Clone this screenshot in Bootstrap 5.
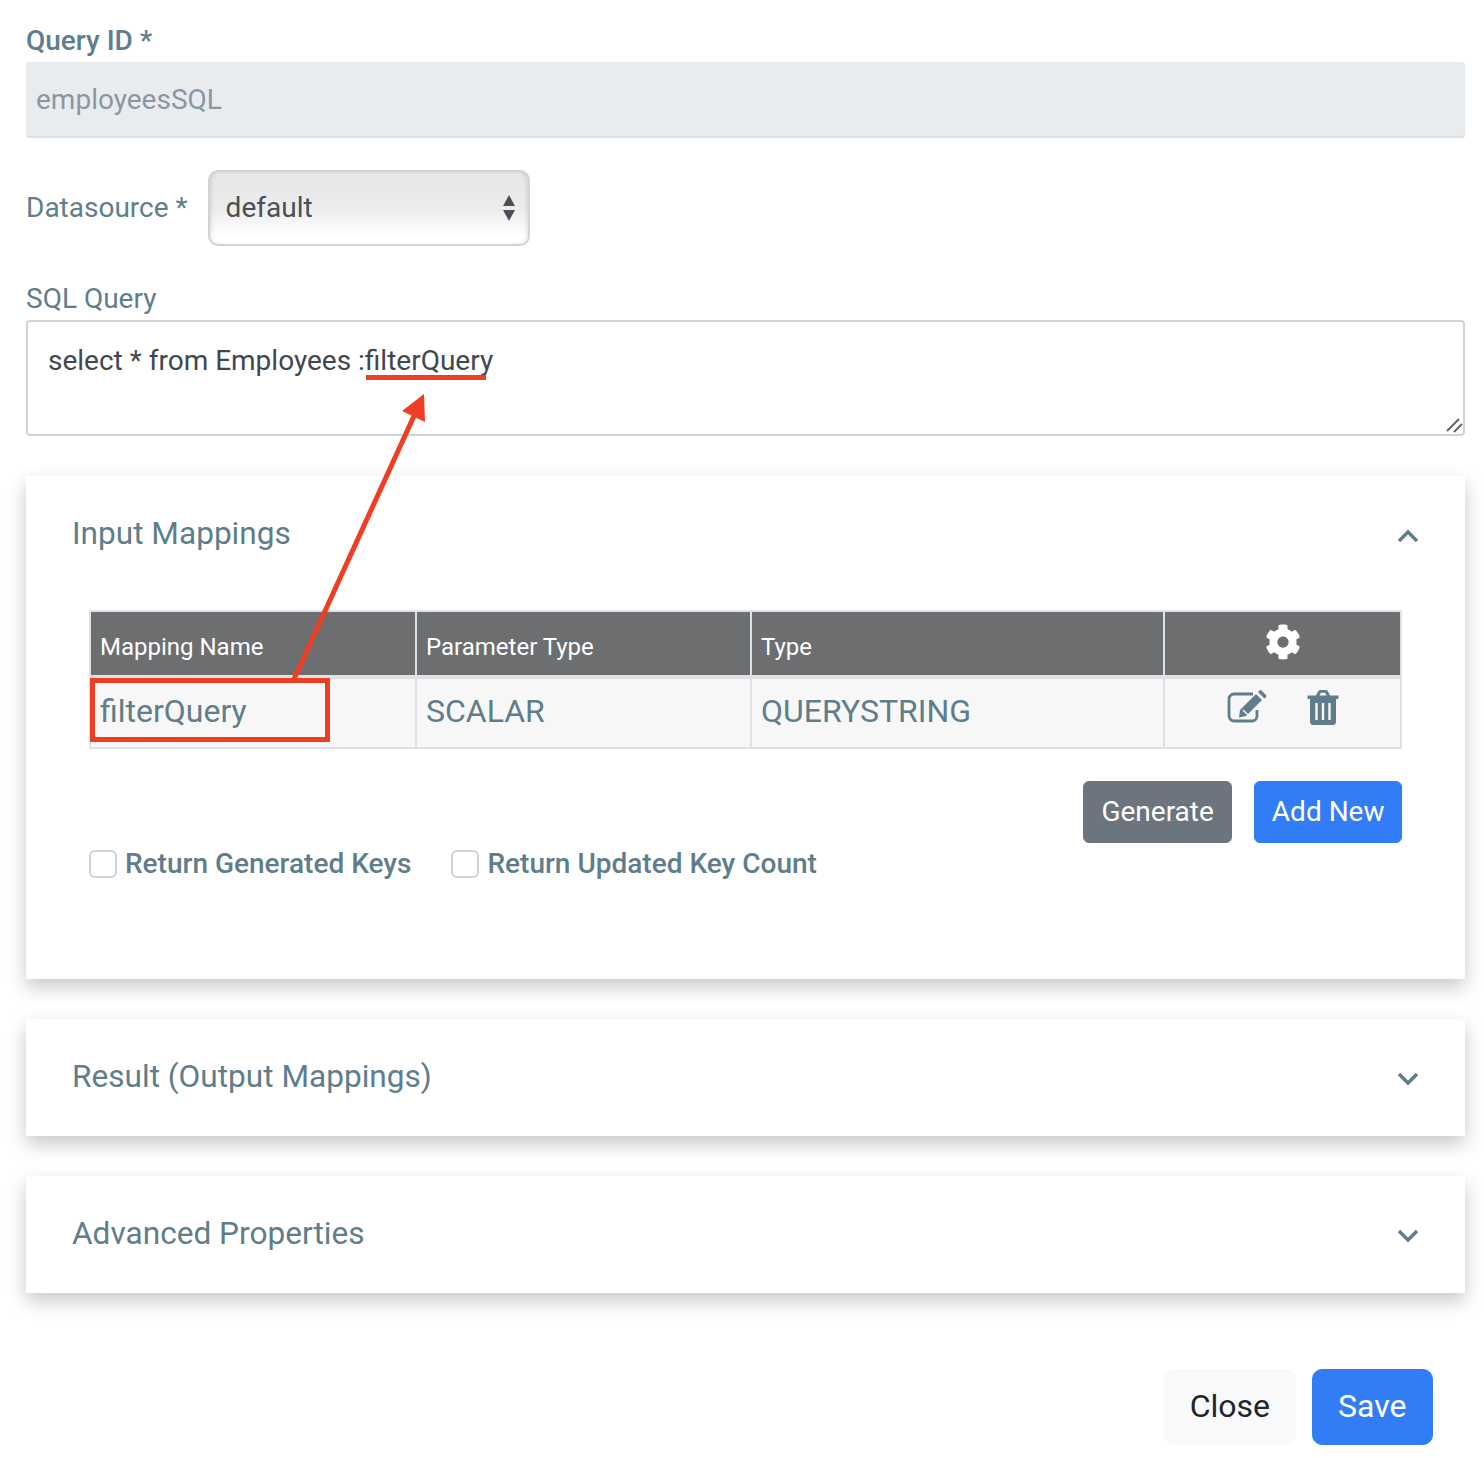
<!DOCTYPE html>
<html lang="en">
<head>
    <meta charset="UTF-8">
    <title>Edit Query</title>
    <link href="https://cdn.jsdelivr.net/npm/bootstrap@5.3.3/dist/css/bootstrap.min.css" rel="stylesheet">
    <style>
        body {
            font-family: Roboto, "Liberation Sans", sans-serif;
            background: #fff;
            color: #607d8b;
            font-size: 28px;
            position: relative;
            height: 1458px;
            overflow: hidden;
        }

        .page {
            padding: 23px 19px 0 26px;
        }

        .field-label {
            font-size: 28px;
            line-height: 36px;
            color: #607d8b;
            margin: 0;
        }

        .query-id {
            height: 76px;
            margin-top: 3px;
            font-size: 28px;
            padding: 2px 10px 0;
            border: 0;
            border-bottom: 2px solid #dcdfe3;
            border-radius: 3px;
            background: #e9ecef;
            color: #8a97a3;
        }

        .ds-row {
            margin-top: 32px;
            height: 76px;
        }

        .ds-select {
            width: 322px;
            height: 76px;
            margin-left: 20px;
            font-size: 28px;
            color: #495057;
            padding: 0 16px;
            border: 2px solid #ced4da;
            border-radius: 10px;
            background-color: #eee;
            background-image: url("data:image/svg+xml,%3Csvg xmlns='http://www.w3.org/2000/svg' viewBox='0 0 14 26'%3E%3Cpath fill='%23495057' d='M7 0l6 11H1zM7 26L1 15h12z'/%3E%3C/svg%3E"), linear-gradient(#e6e6e6, #ececec 50%, #fff 90%);
            background-repeat: no-repeat;
            background-position: right 12px center, 0 0;
            background-size: 14px 26px, 100% 100%;
            box-shadow: inset 3px 0 4px -2px rgba(0, 0, 0, .12), inset -3px 0 4px -2px rgba(0, 0, 0, .12);
        }

        .sql-label {
            margin-top: 35px;
        }

        .sql-box {
            display: block;
            width: 100%;
            height: 116px;
            margin-top: 3px;
            font-size: 28px;
            line-height: 36px;
            padding: 21px 20px;
            border: 2px solid #ced4da;
            border-radius: 4px;
            color: #3f474f;
            resize: none;
        }

        .panel {
            border: 0;
            border-radius: 0;
            background: #fff;
            box-shadow: 0 8px 18px rgba(0, 0, 0, .22);
            margin-top: 40px;
            padding: 0 46px;
        }

        .panel-head {
            height: 117px;
            padding-bottom: 1px;
        }

        .panel-title {
            font-size: 31.6px;
            font-weight: 400;
            color: #607d8b;
            margin: 0;
        }

        .panel-head svg {
            margin-top: 3px;
        }

        .open-body {
            height: 386px;
            padding: 17px 17px 0 17px;
        }

        .map-table {
            table-layout: fixed;
            width: 1311px;
            margin: 0;
            border: 2px solid #dee2e6;
            border-collapse: collapse;
        }

        .map-table th,
        .map-table td {
            border: 2px solid #dee2e6;
            vertical-align: middle;
            padding: 0 9px;
        }

        .map-table th {
            height: 66px;
            background: #6c6e70;
            color: #fff;
            font-size: 24px;
            font-weight: 400;
            padding-top: 6px;
            border-bottom-width: 4px;
        }

        .map-table td {
            height: 71px;
            background: #f7f7f7;
            color: #607d8b;
            font-size: 32px;
            padding-bottom: 5px;
        }

        .action-cell {
            text-align: center;
        }

        .action-cell svg {
            vertical-align: top;
        }

        .gear {
            margin-bottom: 10px;
        }

        .act-row {
            gap: 40px;
            margin-top: -6px;
        }

        .btn-row {
            gap: 22px;
            margin-top: 32px;
        }

        .btn-row .btn {
            height: 62px;
            font-size: 28px;
            padding: 0 17.5px;
            border-radius: 6px;
        }

        .btn-gen {
            background: #6c757d;
            border-color: #6c757d;
            color: #fff;
        }

        .btn-add,
        .btn-save {
            background: #327cf6;
            border-color: #327cf6;
            color: #fff;
        }

        .btn-row .btn-add {
            padding: 0 16.5px;
        }

        .check-row {
            gap: 40px;
        }

        .check-item {
            display: flex;
            align-items: center;
            gap: 8px;
            margin: 0;
            padding: 0;
            min-height: 0;
        }

        .check-item .form-check-input {
            float: none;
            width: 28px;
            height: 28px;
            margin: 0;
            border: 2px solid #ced4da;
            border-radius: 6px;
        }

        .check-item .form-check-label {
            font-size: 28px;
            font-weight: 500;
            color: #607d8b;
        }

        .closed {
            height: 117px;
        }

        .footer-row {
            gap: 16px;
            margin: 76px 32px 0 0;
        }

        .footer-row .btn {
            height: 76px;
            font-size: 32px;
            border-radius: 10px;
            padding: 0 24.5px 2px;
        }

        .footer-row .btn-save {
            padding: 0 25.5px 2px;
        }

        .btn-close-lite {
            background: #f8f9fa;
            border-color: #f8f9fa;
            color: #212529;
        }

        .note-overlay {
            position: absolute;
            left: 0;
            top: 0;
            pointer-events: none;
        }
    </style>
</head>
<body>
    <div class="page">
        <label class="field-label fw-medium d-block">Query ID *</label>
        <div class="query-id d-flex align-items-center">employeesSQL</div>

        <div class="ds-row d-flex align-items-center">
            <label class="field-label">Datasource *</label>
            <select class="form-select ds-select">
                <option>default</option>
            </select>
        </div>

        <label class="field-label sql-label d-block">SQL Query</label>
        <textarea class="sql-box">select * from Employees :filterQuery</textarea>

        <div class="card panel">
            <div class="panel-head d-flex justify-content-between align-items-center">
                <h5 class="panel-title">Input Mappings</h5>
                <svg width="22" height="14" viewBox="0 0 22 14"><path d="M2 12l9-9 9 9" fill="none" stroke="#607d8b" stroke-width="3.400"/></svg>
            </div>
            <div class="open-body">
                <table class="table map-table">
                    <colgroup>
                        <col style="width: 326px">
                        <col style="width: 335px">
                        <col style="width: 413px">
                        <col style="width: 237px">
                    </colgroup>
                    <thead>
                        <tr>
                            <th>Mapping Name</th>
                            <th>Parameter Type</th>
                            <th>Type</th>
                            <th class="action-cell">
                                <svg width="36" height="36" viewBox="0 0 512 512" class="gear"><path fill="#fff" d="M487.4 315.7l-42.6-24.6c4.3-23.2 4.3-47 0-70.2l42.6-24.6c4.9-2.8 7.1-8.6 5.5-14-11.1-35.6-30-67.8-54.7-94.6-3.8-4.1-10-5.1-14.8-2.3L380.8 110c-17.9-15.4-38.5-27.3-60.8-35.1V25.8c0-5.6-3.9-10.5-9.4-11.7-36.7-8.2-74.3-7.8-109.2 0-5.5 1.2-9.4 6.1-9.4 11.7V75c-22.2 7.9-42.8 19.8-60.8 35.1L88.7 85.5c-4.9-2.8-11-1.9-14.8 2.3-24.7 26.7-43.6 58.9-54.7 94.6-1.7 5.4.6 11.2 5.5 14L67.3 221c-4.3 23.2-4.3 47 0 70.2l-42.6 24.6c-4.9 2.8-7.1 8.6-5.5 14 11.1 35.6 30 67.8 54.7 94.6 3.8 4.1 10 5.1 14.8 2.3l42.6-24.6c17.9 15.4 38.5 27.3 60.8 35.1v49.2c0 5.6 3.9 10.5 9.4 11.7 36.7 8.2 74.3 7.8 109.2 0 5.5-1.2 9.4-6.1 9.4-11.7v-49.2c22.2-7.9 42.8-19.8 60.8-35.1l42.6 24.6c4.9 2.8 11 1.9 14.8-2.3 24.7-26.7 43.6-58.9 54.7-94.6 1.5-5.5-.7-11.3-5.6-14.1zM256 336c-44.1 0-80-35.9-80-80s35.9-80 80-80 80 35.9 80 80-35.9 80-80 80z"/></svg>
                            </th>
                        </tr>
                    </thead>
                    <tbody>
                        <tr>
                            <td>filterQuery</td>
                            <td>SCALAR</td>
                            <td>QUERYSTRING</td>
                            <td>
                                <div class="act-row d-flex justify-content-center">
                                    <svg width="40" height="33" viewBox="0 0 40 33">
                                        <path d="M30 20v6a5 5 0 0 1-5 5H7a5 5 0 0 1-5-5V9a5 5 0 0 1 5-5h19" fill="none" stroke="#607d8b" stroke-width="2.800"/>
                                        <path fill="#607d8b" d="M13 20L29 4l6 6-16 16-7 1.500zM31 2l1.500-1.500q1-.8 2 0l4.500 4.500q.8 1 0 2L37.500 8.500z"/>
                                        <path fill="#f7f7f7" d="M15.500 20.500L16.500 19.500l4.500 4.500-1 1z"/>
                                    </svg>
                                    <svg width="32" height="35" viewBox="0 0 32 35">
                                        <path fill="#607d8b" d="M.5 5.500H9l1.800-3.700A3 3 0 0 1 13.500 0h5a3 3 0 0 1 2.700 1.800L23 5.500h8.500V9H.5zM12.500 5.500h7l-1.300-2.700h-4.400zM3 9h26v22.500a3.500 3.500 0 0 1-3.500 3.500h-19A3.500 3.500 0 0 1 3 31.500z"/>
                                        <path stroke="#f7f7f7" stroke-width="2.400" d="M9.500 13v17M16 13v17M22.500 13v17"/>
                                    </svg>
                                </div>
                            </td>
                        </tr>
                    </tbody>
                </table>
                <div class="btn-row d-flex justify-content-end">
                    <button type="button" class="btn btn-gen">Generate</button>
                    <button type="button" class="btn btn-add">Add New</button>
                </div>
                <div class="check-row d-flex">
                    <div class="form-check check-item">
                        <input class="form-check-input" type="checkbox" id="genKeys">
                        <label class="form-check-label" for="genKeys">Return Generated Keys</label>
                    </div>
                    <div class="form-check check-item">
                        <input class="form-check-input" type="checkbox" id="keyCount">
                        <label class="form-check-label" for="keyCount">Return Updated Key Count</label>
                    </div>
                </div>
            </div>
        </div>

        <div class="card panel closed">
            <div class="panel-head d-flex justify-content-between align-items-center">
                <h5 class="panel-title">Result (Output Mappings)</h5>
                <svg width="22" height="14" viewBox="0 0 22 14"><path d="M2 2l9 9 9-9" fill="none" stroke="#607d8b" stroke-width="3.400"/></svg>
            </div>
        </div>

        <div class="card panel closed">
            <div class="panel-head d-flex justify-content-between align-items-center">
                <h5 class="panel-title">Advanced Properties</h5>
                <svg width="22" height="14" viewBox="0 0 22 14"><path d="M2 2l9 9 9-9" fill="none" stroke="#607d8b" stroke-width="3.400"/></svg>
            </div>
        </div>

        <div class="footer-row d-flex justify-content-end">
            <button type="button" class="btn btn-close-lite">Close</button>
            <button type="button" class="btn btn-save">Save</button>
        </div>
    </div>

    <!-- red annotations and the textarea grip, drawn over the form -->
    <svg class="note-overlay" width="1484" height="1458" viewBox="0 0 1484 1458">
        <path d="M1447 431L1459 419M1454 432L1462 424" stroke="#666" stroke-width="2"/>
        <rect x="92.500" y="680.500" width="235" height="59" fill="none" stroke="#ee3f24" stroke-width="5"/>
        <rect x="366" y="375" width="120" height="5" fill="#ee3f24"/>
        <path d="M294 679L414 416" stroke="#ee3f24" stroke-width="5" fill="none"/>
        <path d="M424 394L425 422L402 411z" fill="#ee3f24"/>
    </svg>

    <script src="https://cdn.jsdelivr.net/npm/bootstrap@5.3.3/dist/js/bootstrap.bundle.min.js"></script>
</body>
</html>
